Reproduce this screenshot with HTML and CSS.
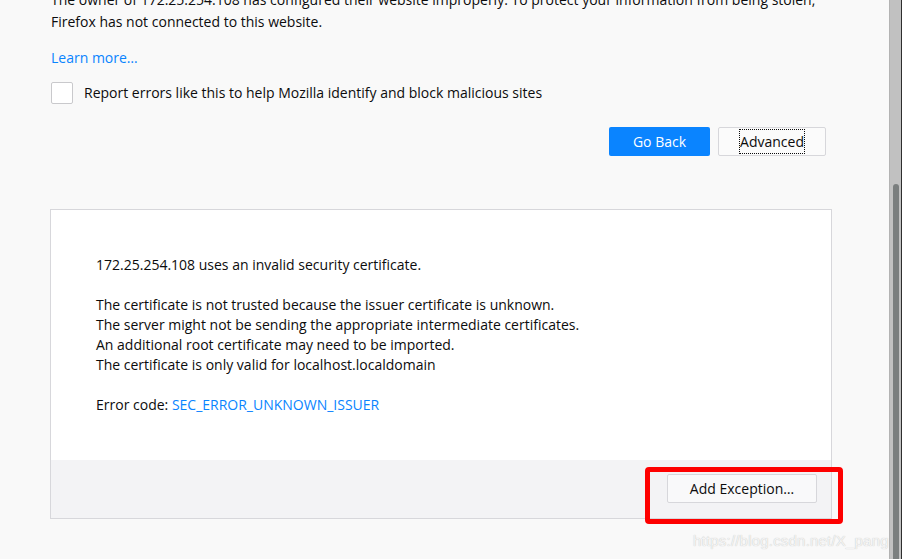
FILE: index.html
```html
<!DOCTYPE html>
<html>
<head>
<meta charset="utf-8">
<link rel="stylesheet" href="styles.css">
</head>
<body>
<div class="window">
  <div class="viewport">
    <div class="content">
      <p class="intro">The owner of 172.25.254.108 has configured their website improperly. To protect your information from being stolen, Firefox has not connected to this website.</p>
      <a class="learn" href="#">Learn more…</a>
      <label class="report">
        <span class="checkbox"></span>
        <span>Report errors like this to help Mozilla identify and block malicious sites</span>
      </label>
      <div class="actions">
        <button class="btn primary">Go Back</button>
        <button class="btn secondary"><span class="focus">Advanced</span></button>
      </div>
      <div class="panel">
        <div class="panel-body">
          <p>172.25.254.108 uses an invalid security certificate.</p>
          <p>The certificate is not trusted because the issuer certificate is unknown.<br>
          The server might not be sending the appropriate intermediate certificates.<br>
          An additional root certificate may need to be imported.<br>
          The certificate is only valid for localhost.localdomain</p>
          <p>Error code: <a class="code" href="#">SEC_ERROR_UNKNOWN_ISSUER</a></p>
        </div>
        <div class="panel-footer">
          <button class="btn exception">Add Exception…</button>
          <span class="highlight"></span>
        </div>
      </div>
    </div>
    <span class="watermark">https://blog.csdn.net/X_pang</span>
  </div>
  <div class="scrollbar">
    <div class="thumb"></div>
  </div>
</div>
</body>
</html>
```
FILE: styles.css
```css
* { box-sizing: border-box; }
html, body { margin: 0; padding: 0; height: 100%; overflow: hidden; }
body {
  font-family: "Open Sans", "Noto Sans", sans-serif;
  font-size: 14px;
  color: #0c0c0d;
  background: #f9f9f9;
}
.window { display: flex; height: 559px; }
.viewport { position: relative; flex: 1; overflow: hidden; }
.content {
  margin-top: -11px;
  padding-left: 51px;
  width: 833px;
}
.intro { margin: 0; line-height: 22px; width: 780px; }
.learn {
  display: inline-block;
  margin-top: 14px;
  color: #0a84ff;
  text-decoration: none;
  line-height: 22px;
}
.report {
  display: flex;
  align-items: center;
  gap: 11px;
  margin-top: 13px;
  line-height: 22px;
}
.checkbox {
  width: 22px; height: 22px;
  background: #fff;
  border: 1px solid #c9c9cc;
  border-radius: 2px;
}
.actions {
  display: flex;
  justify-content: flex-end;
  gap: 8px;
  margin-top: 23px;
  width: 775px;
}
.btn {
  font-family: inherit;
  font-size: 14px;
  height: 29px;
  border-radius: 2px;
  padding: 0;
}
.primary {
  width: 101px;
  background: #0a84ff;
  color: #fff;
  border: none;
}
.secondary {
  width: 108px;
  background: #fbfbfb;
  border: 1px solid #d7d7db;
  color: #0c0c0d;
}
.focus { outline: 1px dotted #0c0c0d; padding: 2px 0; }
.panel {
  margin-top: 53px;
  margin-left: -1px;
  width: 782px;
  border: 1px solid #d7d7db;
  background: #fff;
}
.panel-body { padding: 45px 45px 45px; line-height: 20px; }
.panel-body p { margin: 0 0 20px; }
.panel-body p:last-child { margin-bottom: 0; }
.code { color: #0a84ff; text-decoration: none; }
.panel-footer {
  position: relative;
  display: flex;
  justify-content: flex-end;
  background: #f3f3f5;
  height: 58px;
  padding: 14px 14px 0 0;
}
.exception {
  width: 150px;
  background: #f9f9fa;
  border: 1px solid #d7d7db;
  color: #0c0c0d;
}
.highlight {
  position: absolute;
  left: 594px; top: 7px;
  width: 198px; height: 57px;
  border: 5px solid #fe0000;
  border-radius: 4px;
}
.watermark {
  position: absolute;
  left: 693px; top: 532px;
  font-family: "Liberation Sans", Arial, sans-serif;
  font-size: 15px;
  letter-spacing: 0.2px;
  color: #f4f4f4;
  text-shadow: 0 0 1px #b9b9b9;
}
.scrollbar {
  width: 13px;
  background: #c1c1c1;
  border-left: 1px solid #b3b3b3;
  border-right: 1px solid #2e2e2e;
  padding-top: 184px;
  display: flex;
  justify-content: center;
}
.thumb {
  width: 6px;
  height: 100%;
  background: #7a7e7e;
  border-radius: 3px 3px 0 0;
}
```
